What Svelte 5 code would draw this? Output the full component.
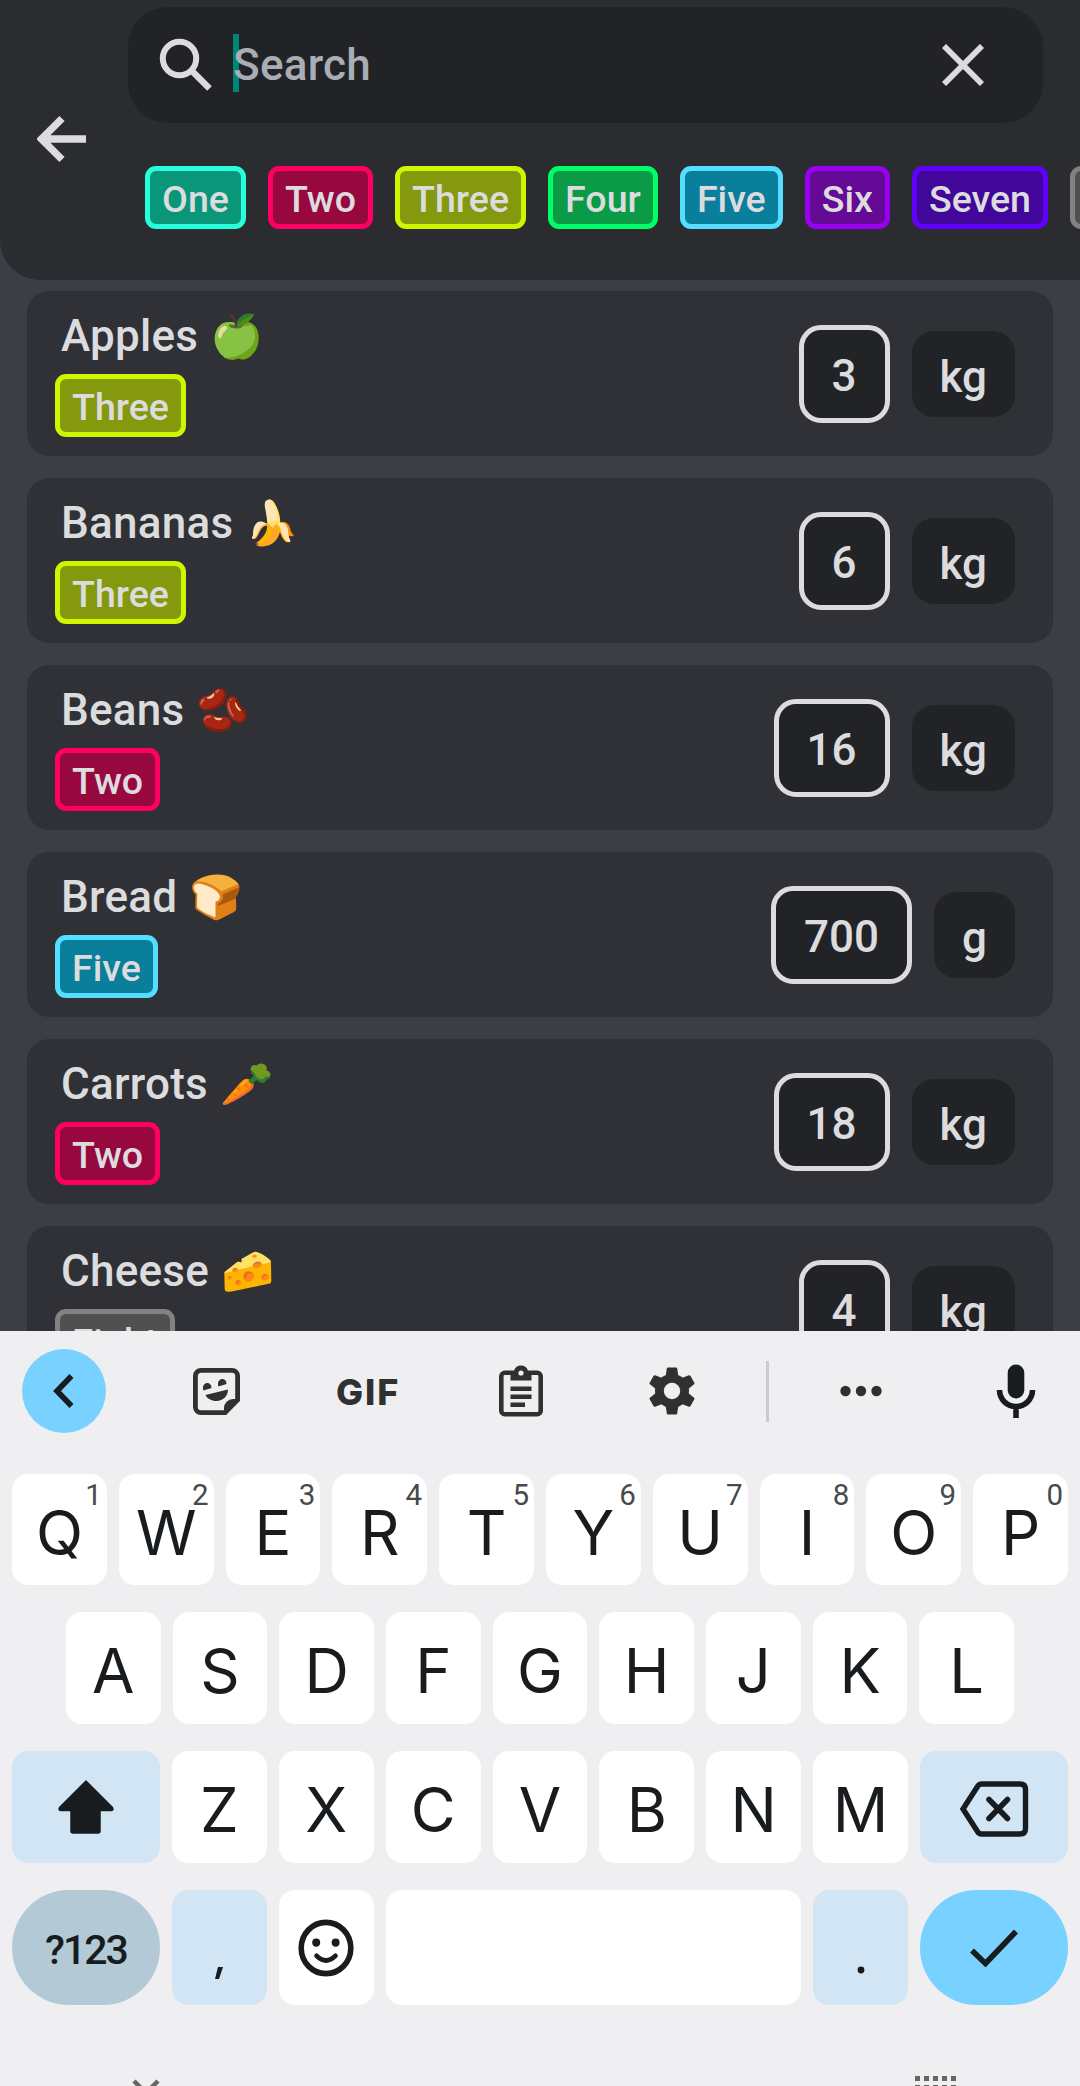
<script>
  const filters = ['One', 'Two', 'Three', 'Four', 'Five', 'Six', 'Seven', 'Eight'];
  const items = [
    { name: 'Apples', emoji: '🍏', tag: 'Three', amount: '3', unit: 'kg' },
    { name: 'Bananas', emoji: '🍌', tag: 'Three', amount: '6', unit: 'kg' },
    { name: 'Beans', emoji: '🫘', tag: 'Two', amount: '16', unit: 'kg' },
    { name: 'Bread', emoji: '🍞', tag: 'Five', amount: '700', unit: 'g' },
    { name: 'Carrots', emoji: '🥕', tag: 'Two', amount: '18', unit: 'kg' },
    { name: 'Cheese', emoji: '🧀', tag: 'Eight', amount: '4', unit: 'kg' },
  ];
  const row1 = [...'QWERTYUIOP'];
  const hints = [...'1234567890'];
  const row2 = [...'ASDFGHJKL'];
  const row3 = [...'ZXCVBNM'];
</script>

<div class="screen">
  <header>
    <button class="back" aria-label="Back">
      <svg width="50" height="48" viewBox="0 0 50 48"><path d="M49 24H5M25 3.5 4.5 24 25 44.5" fill="none" stroke="#dcdcde" stroke-width="7.4" /></svg>
    </button>
    <div class="head-body">
      <div class="search">
        <svg class="glass" width="54" height="54" viewBox="0 0 54 54" fill="none" stroke="#dcdcde"><circle cx="20.5" cy="20.5" r="16.7" stroke-width="6" /><path d="M33.5 33.5 50.5 50.5" stroke-width="6.5" /></svg>
        <div class="field"><i class="caret"></i><span>Search</span></div>
        <svg class="clear" width="42" height="42" viewBox="0 0 42 42"><path d="M2 2 40 40M40 2 2 40" stroke="#dcdcde" stroke-width="5.8" /></svg>
      </div>
      <div class="filters">
        {#each filters as f}<span class="tag {f.toLowerCase()}">{f}</span>{/each}
      </div>
    </div>
  </header>

  <main>
    {#each items as item}
      <article>
        <div class="info">
          <div class="title">{item.name} <span class="emoji">{item.emoji}</span></div>
          <span class="tag {item.tag.toLowerCase()}">{item.tag}</span>
        </div>
        <div class="amount">{item.amount}</div>
        <div class="unit">{item.unit}</div>
      </article>
    {/each}
  </main>

  <section class="keyboard">
    <div class="toolbar">
      <div class="collapse"><svg width="22" height="36" viewBox="0 0 22 36"><path d="M18.5 3 4 18 18.5 33" fill="none" stroke="#191c1e" stroke-width="5.6" /></svg></div>
      <svg class="sticker" width="47" height="47" viewBox="0 0 47 47" fill="#303030">
        <path d="M8 2.4H39a5.6 5.6 0 0 1 5.6 5.6V32L32 44.6H8A5.6 5.6 0 0 1 2.4 39V8A5.6 5.6 0 0 1 8 2.4Z" fill="none" stroke="#303030" stroke-width="4.8" />
        <path d="M31 47V40a9 9 0 0 1 9-9h7L33 47Z" />
        <path d="M12.500 27 35 21.500C35 28 30 33 23.500 33 18.500 33 14 30.500 12.500 27ZM10.500 22.500c-1.500-4 .5-7.300 3.500-7.500 2.500 0 4.500 1.500 4.500 5ZM25.500 18.500c-1.500-4 .5-7.300 3.500-7.500 2.500 0 4.500 1.500 4.500 5Z" />
      </svg>
      <span class="gif">GIF</span>
      <svg class="clip" width="44" height="52" viewBox="0 0 44 52">
        <rect x="2.300" y="7.800" width="39.400" height="41.400" rx="3.500" fill="none" stroke="#303030" stroke-width="4.600" />
        <path d="M11.500 15.500V6H15a7.200 7.200 0 0 1 14 0h3.500v9.500Z" fill="#303030" /><circle cx="22" cy="8" r="2.600" fill="#efeff2" />
        <path d="M11.500 23.700h21M11.500 31.700h21M11.500 39.700H26" stroke="#303030" stroke-width="4.600" />
      </svg>
      <svg class="gear" width="46" height="48" viewBox="0 0 46 48">
        <g fill="#303030"><circle cx="23" cy="24" r="17" />
          {#each [0, 60, 120, 180, 240, 300] as a}<path d="M16.500 10.500 17.800 1.500Q18 .5 19 .5h8q1 0 1.200 1l1.300 9Z" transform="rotate({a} 23 24)" />{/each}
        </g><circle cx="23" cy="24" r="8.200" fill="#efeff2" />
      </svg>
      <i class="divider"></i>
      <svg class="more" width="42" height="12" viewBox="0 0 42 12" fill="#303030"><circle cx="5.500" cy="6" r="5.200" /><circle cx="21" cy="6" r="5.200" /><circle cx="36.500" cy="6" r="5.200" /></svg>
      <svg class="mic" width="40" height="54" viewBox="0 0 40 54"><rect x="11.700" y=".5" width="16.600" height="34" rx="8.300" fill="#191c1e" /><path d="M3.500 26v0a16.500 16.500 0 0 0 33 0M20 42.500V54" fill="none" stroke="#191c1e" stroke-width="5.600" /></svg>
    </div>

    <div class="row first">
      {#each row1 as k, i}<div class="key">{k}<sup>{hints[i]}</sup></div>{/each}
    </div>
    <div class="row second">
      {#each row2 as k}<div class="key">{k}</div>{/each}
    </div>
    <div class="row third">
      <div class="key tint wide"><svg width="58" height="56" viewBox="0 0 58 56"><path d="M29 2 55.500 28.500Q57 31.500 54 31.500H43V52q0 2-2 2H16q-2 0-2-2V31.500H4Q1 31.500 2.500 28.500Z" fill="#191c1e" stroke="#191c1e" stroke-width="1.500" stroke-linejoin="round" /></svg></div>
      {#each row3 as k}<div class="key">{k}</div>{/each}
      <div class="key tint wide"><svg class="erase" width="70" height="56" viewBox="0 0 70 56" fill="none" stroke="#191c1e" stroke-width="5.400"><path d="M4 28 18.500 5.500Q20 3 22.500 3H61q5.500 0 5.500 5.500v39Q66.500 53 61 53H22.500Q20 53 18.500 50.500Z" /><path d="M30 18.500 48.500 37.500M48.500 18.500 30 37.500" stroke-linecap="round" stroke-width="5.600" /></svg></div>
    </div>
    <div class="row fourth">
      <div class="key pill sym">?123</div>
      <div class="key tint"><svg width="12" height="14" viewBox="0 0 12 14" class="low comma"><path d="M5 1H10L6 13H2Z" fill="#191c1e" /></svg></div>
      <div class="key"><svg width="56" height="58" viewBox="0 0 56 56" preserveAspectRatio="none" fill="none" stroke="#191c1e"><circle cx="28" cy="28" r="24.800" stroke-width="5.600" /><path d="M18.500 35.500q9.500 9 19 0" stroke-width="4.600" stroke-linecap="round" /><g fill="#191c1e" stroke="none"><circle cx="18.200" cy="22.800" r="4" /><circle cx="37.600" cy="22.800" r="4" /></g></svg></div>
      <div class="key space"></div>
      <div class="key tint"><svg class="low dot" width="8" height="8" viewBox="0 0 8 8"><circle cx="4" cy="4" r="3.400" fill="#191c1e" /></svg></div>
      <div class="key pill go"><svg width="50" height="38" viewBox="0 0 50 38"><path d="M3 21.500 16.500 34.500 47 2.500" fill="none" stroke="#191c1e" stroke-width="5.600" /></svg></div>
    </div>
    <div class="nav">
      <svg class="hide" width="28" height="18" viewBox="0 0 28 18"><path d="M2 2 14 14 26 2" fill="none" stroke="#666" stroke-width="4.400" /></svg>
      <div class="dots">{#each Array(15) as _}<i></i>{/each}</div>
    </div>
  </section>
</div>

<style>
  :global(body) { margin: 0; overflow: hidden; background: #3c3e46; }
  * { box-sizing: border-box; }
  svg { display: block; flex: none; }
  .screen { width: 1080px; height: 2086px; overflow: hidden; display: flex; flex-direction: column; background: #3c3e46; color: #dcdcde; font: 500 44px/52px Roboto, sans-serif; }
  header { flex: none; height: 280px; display: flex; background: #2b2c30; border-bottom-left-radius: 40px; overflow: hidden; }
  .back { width: 128px; padding: 0 0 2px 37px; border: 0; background: none; }
  .head-body { flex: 1; min-width: 0; padding-top: 7px; }
  .search { width: 915px; height: 116px; border-radius: 40px; background: #222327; display: flex; align-items: center; padding: 0 59px 0 31px; }
  .field { flex: 1; position: relative; margin-left: 20px; color: #a9adb6; display: flex; align-items: center; height: 58px; margin-top: -4px; padding-top: 3px; letter-spacing: .25px; }
  .field span { position: relative; }
  .caret { position: absolute; left: 0; top: 0; width: 6px; height: 58px; background: #008577; }
  .filters { display: flex; gap: 22px; margin: 43px 0 0 17px; }
  .tag { display: inline-flex; flex: none; align-items: center; height: 63px; border: 5px solid; border-radius: 11px; padding: 3px 12px 0; font-size: 37.600px; line-height: 50px; color: #dcdcde; }
  .one { background: #0a9779; border-color: #26ffd9; }
  .two { background: #97083f; border-color: #ff0062; }
  .three { background: #84990d; border-color: #d0f500; }
  .four { background: #0b9a45; border-color: #00ff66; }
  .five { background: #0a7f9b; border-color: #55deff; }
  .six { background: #640a97; border-color: #9900f2; }
  .seven { background: #40079a; border-color: #6200ff; }
  .eight { background: #505050; border-color: #828282; }

  main { flex: none; height: 1051px; overflow: hidden; padding: 11px 27px 0; display: flex; flex-direction: column; gap: 22px; }
  article { flex: none; height: 165px; border-radius: 22px; background: #303136; display: flex; align-items: center; padding: 0 38px 0 28px; }
  .info { flex: 1; align-self: stretch; padding-top: 19px; }
  .title { height: 64px; padding-left: 6px; white-space: pre; line-height: 52px; letter-spacing: .25px; }
  .emoji { font-family: 'Noto Color Emoji', sans-serif; font-size: 43px; line-height: 1; margin-left: 1px; }
  .amount { height: 98px; border: 5.5px solid #dcdcde; border-radius: 22px; background: #222327; padding: 5px 28px 0; line-height: 83px; margin-right: 22px; }
  .unit { height: 86px; border-radius: 22px; background: #222327; padding: 5px 28px 0; line-height: 83px; }

  .keyboard { flex: none; height: 755px; background: #efeff2; color: #191c1e; overflow: hidden; font-family: Inter, sans-serif; font-weight: 370; }
  .toolbar { height: 143px; display: flex; align-items: center; padding: 0 0 23px 22px; }
  .collapse { width: 84px; height: 84px; border-radius: 50%; background: #78d1ff; display: flex; align-items: center; justify-content: center; }
  .sticker { margin-left: 87px; }
  .gif { width: 64px; margin-left: 96px; padding-top: 2px; font: 800 36px/44px Inter, sans-serif; letter-spacing: 2px; color: #303030; }
  .clip { margin-left: 99px; }
  .gear { margin-left: 106px; }
  .divider { width: 3px; height: 61px; margin-left: 71px; background: #cacbce; }
  .more { margin-left: 71px; }
  .mic { margin-left: 114px; }
  .row { display: flex; gap: 12px; padding: 0 12px; height: 112px; margin-bottom: 27px; }
  .row.first { height: 111px; }
  .row.second { padding: 0 66px; }
  .row.fourth { height: 115px; margin: 0; }
  .key { flex: 1 1 0; position: relative; border-radius: 16px; background: #fff; display: flex; align-items: center; justify-content: center; font-size: 61.500px; line-height: 80px; padding-top: 6px; }
  .key:has(svg) { padding-top: 0; }
  .key sup { position: absolute; top: 1px; right: 5px; font: 450 29.500px/40px Roboto, sans-serif; color: #47494b; }
  .tint { background: #d2e5f5; }
  .wide, .pill { flex: 0 0 148px; }
  .third .key:not(.wide), .fourth .key:not(.pill, .space) { flex: 0 0 94.860px; }
  .space { flex: 1; }
  .pill { border-radius: 57px; }
  .sym { background: #b4c9d6; font: 500 41px/60px Roboto, sans-serif; letter-spacing: -2px; padding-top: 4px; }
  .go { background: #78d1ff; }
  .low.comma { margin-top: 51px; }
  .low.dot { margin-top: 45px; }
  .erase { margin-top: 4px; }
  .nav { display: flex; justify-content: space-between; padding: 71px 124px 0 132px; }
  .hide { margin-top: 3px; }
  .dots { display: grid; grid-template-columns: repeat(5, 5px); gap: 4px; }
  .dots i { width: 5px; height: 5px; background: #666; }
</style>
